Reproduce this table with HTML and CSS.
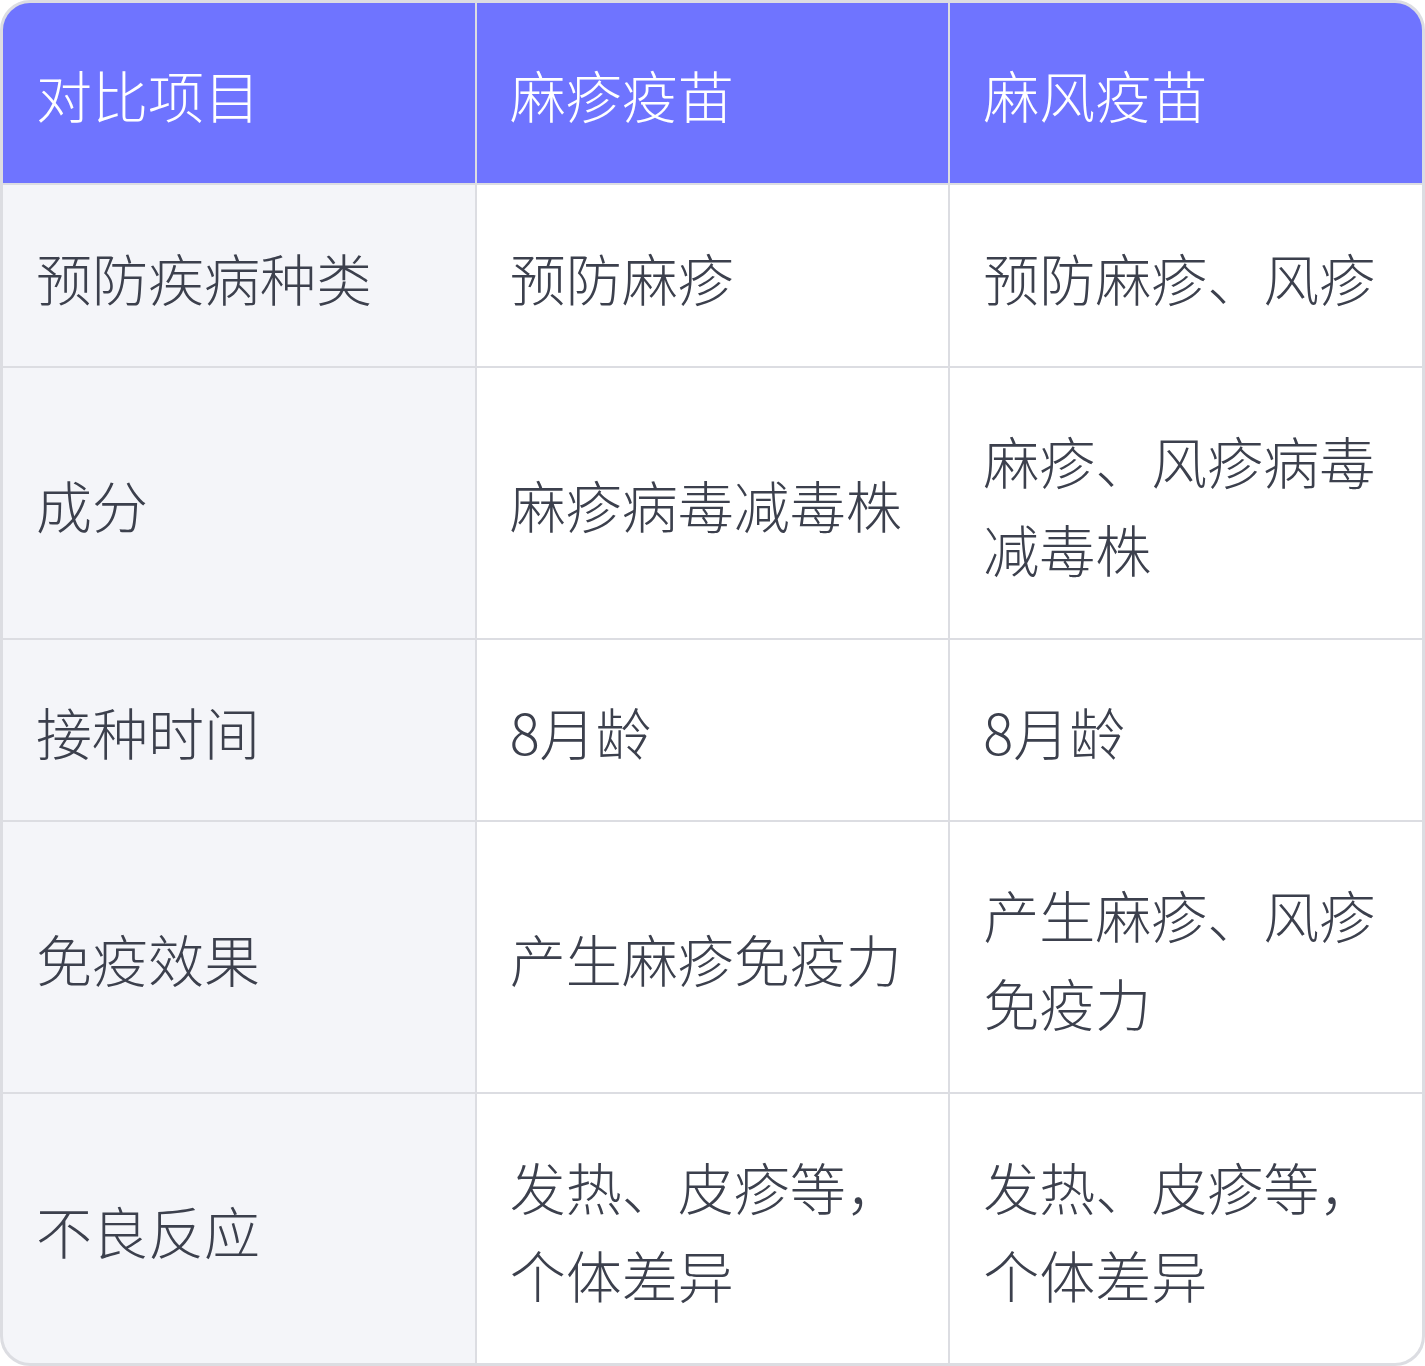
FILE: index.html
```html
<!DOCTYPE html>
<html lang="zh-CN">
<head>
<meta charset="utf-8">
<title>麻疹疫苗与麻风疫苗对比</title>
<link rel="stylesheet" href="styles.css">
</head>
<body>
<div class="table">
  <div class="cell head">对比项目</div>
  <div class="cell head">麻疹疫苗</div>
  <div class="cell head">麻风疫苗</div>

  <div class="cell label">预防疾病种类</div>
  <div class="cell">预防麻疹</div>
  <div class="cell">预防麻疹、风疹</div>

  <div class="cell label">成分</div>
  <div class="cell">麻疹病毒减毒株</div>
  <div class="cell">麻疹、风疹病毒减毒株</div>

  <div class="cell label">接种时间</div>
  <div class="cell">8月龄</div>
  <div class="cell">8月龄</div>

  <div class="cell label">免疫效果</div>
  <div class="cell">产生麻疹免疫力</div>
  <div class="cell">产生麻疹、风疹免疫力</div>

  <div class="cell label">不良反应</div>
  <div class="cell">发热、皮疹等，个体差异</div>
  <div class="cell">发热、皮疹等，个体差异</div>
</div>
</body>
</html>
```

FILE: styles.css
```css
html, body {
  margin: 0;
  padding: 0;
  background: #ffffff;
}

.table {
  box-sizing: border-box;
  width: 1425px;
  height: 1366px;
  border: 3px solid #dcdde2;
  border-radius: 30px;
  overflow: hidden;
  display: grid;
  grid-template-columns: 1fr 1fr 1fr;
  grid-template-rows: 180px 181px 270px 180px 270px 1fr;
  gap: 2px;
  background: #dcdde2;
  font-family: "Noto Sans CJK SC", "Noto Sans", sans-serif;
  font-weight: 300;
  font-size: 56px;
  line-height: 88px;
  color: #3c404d;
}

.cell {
  background: #ffffff;
  padding: 2px 30px 0 33px;
  display: flex;
  align-items: center;
}

.cell.label {
  background: #f4f5f9;
}

.cell.head {
  background: #6f74ff;
  color: #ffffff;
}
```
